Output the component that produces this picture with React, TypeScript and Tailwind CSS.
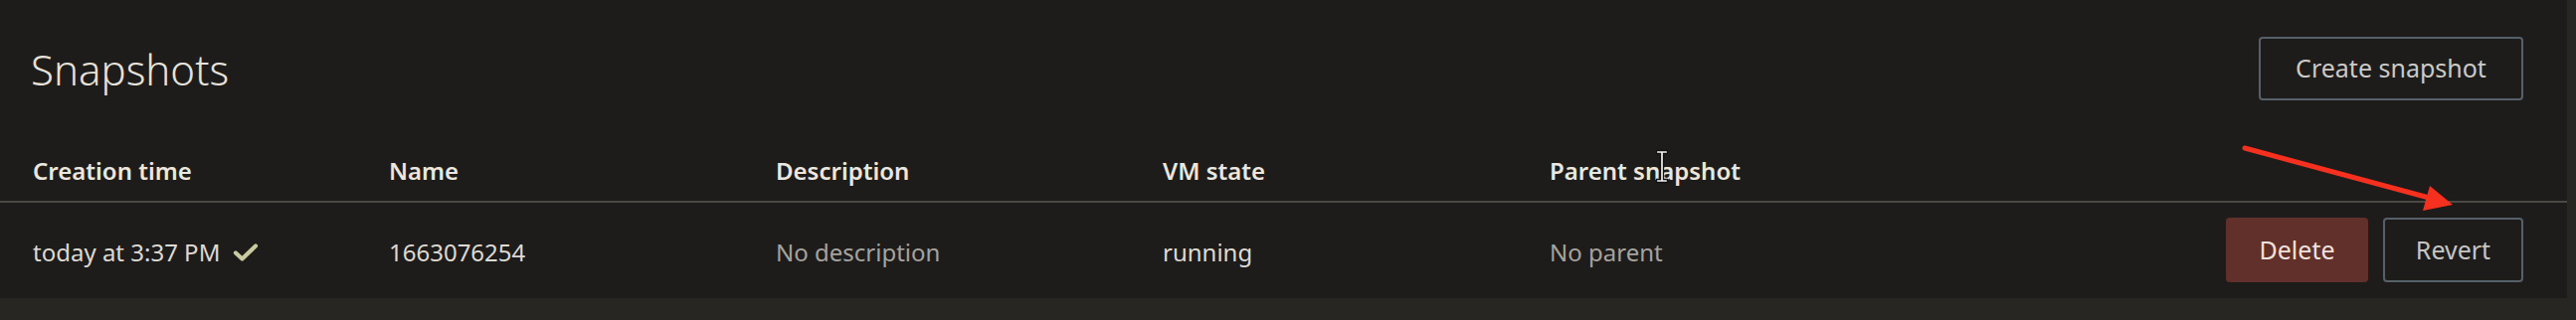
import React from 'react';

interface Snapshot {
    created: string;
    name: string;
    description: string;
    state: string;
    parent: string;
}

const snapshots: Snapshot[] = [
    {
        created: 'today at 3:37 PM',
        name: '1663076254',
        description: 'No description',
        state: 'running',
        parent: 'No parent',
    },
];

const columns = ['Creation time', 'Name', 'Description', 'VM state', 'Parent snapshot'];

const CheckIcon = () => (
    <svg width="26" height="20" viewBox="0 0 26 20" className="ml-[13px]">
        <path d="M3 10.5 L9.5 16.5 L23 3.5" fill="none" stroke="#c8caa0" strokeWidth="4.2" strokeLinecap="round" strokeLinejoin="round" />
    </svg>
);

const App: React.FC = () => {
    return (
        <div className="relative h-[322px] w-[2590px] bg-[#282622]" style={{ fontFamily: '"Noto Sans", "Open Sans", sans-serif' }}>
            <div className="h-[300px] w-[2581px] bg-[#1e1c1a]">
                {/* Title */}
                <div className="flex h-[101px] items-end justify-between pl-[31px] pr-[44px]">
                    <h1 className="pb-[1px] text-[42px] leading-[60px] font-light text-[#e6e2da]">Snapshots</h1>
                    <button className="h-[64px] w-[266px] rounded-[4px] border-2 border-[#56606a] text-[25px] text-[#cbcac6]">
                        Create snapshot
                    </button>
                </div>

                {/* Table header */}
                <div className="grid h-[103px] grid-cols-[358px_389px_389px_389px_389px_1fr] items-end border-b-2 border-[#4a4946] pb-[12px] pl-[33px]">
                    {columns.map((c) => (
                        <div key={c} className="text-[24px] leading-[36px] font-semibold text-[#ebe7df]">
                            {c}
                        </div>
                    ))}
                </div>

                {/* Rows */}
                {snapshots.map((s) => (
                    <div key={s.name} className="grid h-[94px] grid-cols-[358px_389px_389px_389px_389px_1fr] items-center pl-[33px] text-[24px] leading-[36px]">
                        <div className="flex items-center pt-[6px] text-[#dedad2]">
                            {s.created}
                            <CheckIcon />
                        </div>
                        <div className="pt-[6px] text-[#dedad2]">{s.name}</div>
                        <div className="pt-[6px] text-[#a6a39e]">{s.description}</div>
                        <div className="pt-[6px] text-[#dedad2]">{s.state}</div>
                        <div className="pt-[6px] text-[#a6a39e]">{s.parent}</div>
                        <div className="flex justify-end gap-[15px] pr-[44px]">
                            <button className="h-[65px] w-[143px] rounded-[4px] bg-[#62302a] text-[25px] text-[#efe2dd]">Delete</button>
                            <button className="h-[65px] w-[141px] rounded-[4px] border-2 border-[#56606a] text-[25px] text-[#c6c5c1]">
                                Revert
                            </button>
                        </div>
                    </div>
                ))}
            </div>

            {/* annotation arrow */}
            <svg className="pointer-events-none absolute left-[2240px] top-[135px]" width="240" height="90" viewBox="2240 135 240 90">
                <line x1="2257" y1="149" x2="2446" y2="200" stroke="#f5301e" strokeWidth="5" strokeLinecap="round" />
                <polygon points="2443,187 2466,206 2436,212" fill="#f5301e" />
            </svg>

            {/* text cursor */}
            <svg className="pointer-events-none absolute left-[1664px] top-[150px]" width="14" height="35" viewBox="0 0 14 35">
                <path
                    d="M1.5 1.5 H12.5 V4.5 H8.5 V30.5 H12.5 V33.5 H1.5 V30.5 H5.5 V4.5 H1.5 Z"
                    fill="#f4f4f4"
                    stroke="#111"
                    strokeWidth="1.3"
                />
            </svg>
        </div>
    );
};

export default App;
